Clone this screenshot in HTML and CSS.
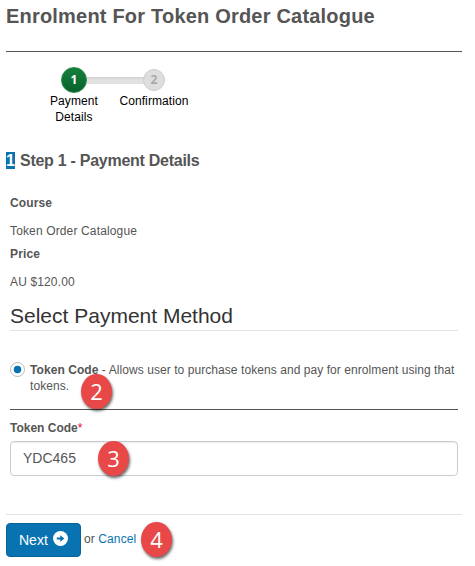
FILE: index.html
```html
<!DOCTYPE html>
<html lang="en">
<head>
<meta charset="utf-8">
<title>Enrolment For Token Order Catalogue</title>
<link rel="stylesheet" href="styles.css">
</head>
<body>
<main class="page">
  <h1 class="title"><span>Enrolment For Token Order Catalogue</span></h1>
  <ol class="steps">
    <li class="step active"><span class="dot">1</span><span class="step-label">Payment Details</span></li>
    <li class="step"><span class="dot">2</span><span class="step-label">Confirmation</span></li>
  </ol>
  <h2 class="step-title"><span class="mark">1</span><span class="step-name">Step 1 - Payment Details</span></h2>
  <section class="content">
    <dl class="details">
      <dt><span>Course</span></dt><dd><span>Token Order Catalogue</span></dd>
      <dt><span>Price</span></dt><dd><span>AU $120.00</span></dd>
    </dl>
    <h3 class="method-title"><span>Select Payment Method</span></h3>
    <div class="method">
      <span class="radio"></span>
      <p class="method-text"><b>Token Code</b> - Allows user to purchase tokens and pay for enrolment using that tokens.</p>
      <span class="callout callout-two">2</span>
    </div>
    <div class="field-label"><b>Token Code</b><span class="required">*</span></div>
    <div class="field"><span>YDC465</span><span class="callout callout-three">3</span></div>
  </section>
  <div class="actions">
    <button class="next"><span>Next</span>
      <svg class="arrow" viewBox="0 0 14 14"><circle cx="7" cy="7" r="7" fill="#fff"/><path d="M3.5 6h3.3V3.9L10.6 7 6.8 10.1V8H3.5z" fill="#0873b0"/></svg>
    </button>
    <span class="or">or <a class="cancel">Cancel</a></span>
    <span class="callout callout-four">4</span>
  </div>
</main>
</body>
</html>
```
FILE: styles.css
```css
* { box-sizing: border-box; }
body {
  margin: 0;
  min-height: 566px;
  background: #fff;
  color: #555;
  font: 12px/16px "Liberation Sans", Arial, sans-serif;
}
h1, h2, h3, p, ol, dl, dd { margin: 0; padding: 0; }
.page { width: 462px; min-height: 566px; padding-left: 6px; }
.title {
  height: 52px;
  border-bottom: 1px solid #555;
  font-size: 20px;
  line-height: 32px;
  letter-spacing: 0.2px;
  white-space: nowrap;
}
.steps {
  display: flex;
  list-style: none;
  padding: 15px 0 0 28px;
  height: 95px;
}
.step {
  width: 80px;
  display: flex;
  flex-direction: column;
  align-items: center;
  color: #000;
  text-align: center;
  position: relative;
}
.step-label { padding: 0 10px; letter-spacing: 0.1px; }
.step + .step .step-label { padding: 0; }
.dot {
  width: 22px;
  height: 22px;
  margin: 2px 0;
  border-radius: 50%;
  background: #dedede;
  border: 1px solid #cecece;
  color: #aaa;
  font: bold 12px/20px "Open Sans", sans-serif;
  position: relative;
  z-index: 1;
}
.active .dot {
  width: 26px;
  height: 26px;
  margin: 0;
  line-height: 24px;
  color: #fff;
  background: linear-gradient(#15803c, #07622a);
  border-color: #27854a;
}
.active::after {
  content: "";
  position: absolute;
  left: 50%;
  top: 10px;
  width: 80px;
  height: 7px;
  background: linear-gradient(#d0d0d0, #e2e2e2 40%);
}
.step-title {
  height: 48px;
  font-size: 16px;
  line-height: 28px;
  letter-spacing: -0.27px;
}
.mark {
  display: inline-block;
  width: 9px;
  margin-right: 5px;
  background: #0873b0;
  color: #fff;
  line-height: 17px;
}
.content { padding: 0 4px; }
.details { height: 106px; letter-spacing: 0.14px; }
.details dt { font-weight: bold; line-height: 16px; }
.details dd { line-height: 16px; margin: 12px 0 7px; }
.method-title {
  height: 30px;
  border-bottom: 1px solid #e3e3e3;
  color: #333;
  font-size: 21px;
  font-weight: normal;
  line-height: 30px;
}
.method {
  display: flex;
  position: relative;
  height: 79px;
  padding-top: 31px;
  border-bottom: 1px solid #555;
}
.method-text { letter-spacing: 0.067px; }
.radio {
  flex: none;
  width: 15px;
  height: 15px;
  margin: 0 5px 0 0;
  border: 1px solid #bbb;
  border-radius: 50%;
  background: radial-gradient(circle, #0873b0 3.5px, transparent 4.2px);
}
.field-label { padding-top: 10px; height: 31px; }
.required { color: #f00036; }
.field {
  position: relative;
  height: 35px;
  padding: 0 12px;
  border: 1px solid #ccc;
  border-radius: 4px;
  box-shadow: inset 0 1px 1px rgba(0, 0, 0, 0.075);
  font-size: 14px;
  line-height: 33px;
}
.actions {
  position: relative;
  display: flex;
  align-items: flex-start;
  margin-top: 38px;
  padding-top: 8px;
  border-top: 1px solid #e3e3e3;
}
.next {
  display: flex;
  align-items: center;
  width: 75px;
  height: 34px;
  padding: 0 0 0 12px;
  border: 1px solid #05639a;
  border-radius: 4px;
  background: #0873b0;
  color: #fff;
  font: 14px/32px "Liberation Sans", Arial, sans-serif;
}
.arrow { width: 15px; height: 15px; margin: -4px 0 0 5px; }
.or { margin: 8px 0 0 3px; letter-spacing: 0.1px; }
.cancel { color: #0873b0; }
.callout {
  position: absolute;
  width: 31px;
  height: 35px;
  border-radius: 50%;
  background: #e84848;
  box-shadow: 1px 2px 3px rgba(0, 0, 0, 0.6);
  color: #fff;
  font: 500 22px/35px "Open Sans", sans-serif;
  letter-spacing: 0;
  text-align: center;
}
.callout-two { left: 71px; top: 43px; }
.callout-three { left: 87px; top: -1px; }
.callout-four { left: 135px; top: 7px; }
```
